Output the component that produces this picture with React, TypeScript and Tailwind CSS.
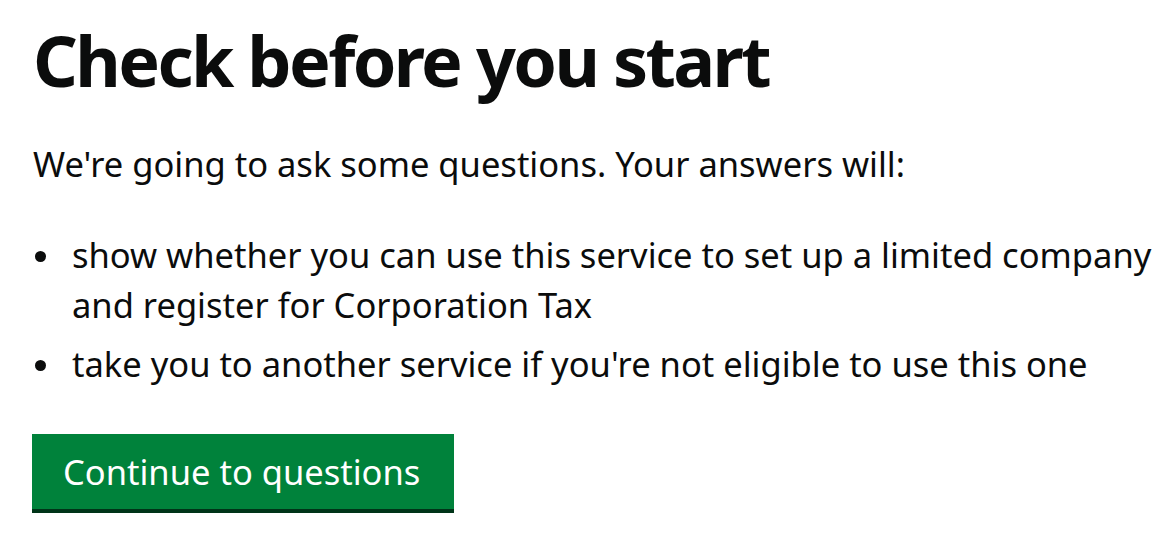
export default function App() {
  return (
    <div className="w-[1176px] h-[546px] bg-white text-[#0b0c0c] pl-[33px] pr-[16px] pt-[18px]" style={{ fontFamily: '"Noto Sans", Arial, sans-serif' }}>
      <h1 className="text-[70px] leading-[84px] font-bold tracking-[-2.6px] mb-[37px] whitespace-nowrap">Check before you start</h1>
      <p className="text-[34.5px] leading-[50px] mb-[41px]">We're going to ask some questions. Your answers will:</p>
      <ul className="text-[34.5px] leading-[50px] mb-[45px]">
        <li className="flex mb-[9px]">
          <span className="w-[39px] shrink-0 flex items-start pt-[21px] pl-[2px]"><span className="w-[11px] h-[11px] rounded-full bg-[#0b0c0c]" /></span>
          <span>show whether you can use this service to set up a limited company and register for Corporation Tax</span>
        </li>
        <li className="flex">
          <span className="w-[39px] shrink-0 flex items-start pt-[21px] pl-[2px]"><span className="w-[11px] h-[11px] rounded-full bg-[#0b0c0c]" /></span>
          <span>take you to another service if you're not eligible to use this one</span>
        </li>
      </ul>
      <button className="block -ml-[1px] bg-[#00823b] text-white text-[34.5px] leading-[50px] pl-[31px] pt-[13px] pb-[12px] shadow-[0_4px_0_#003418] w-[422px] text-left whitespace-nowrap">Continue to questions</button>
    </div>
  );
}
